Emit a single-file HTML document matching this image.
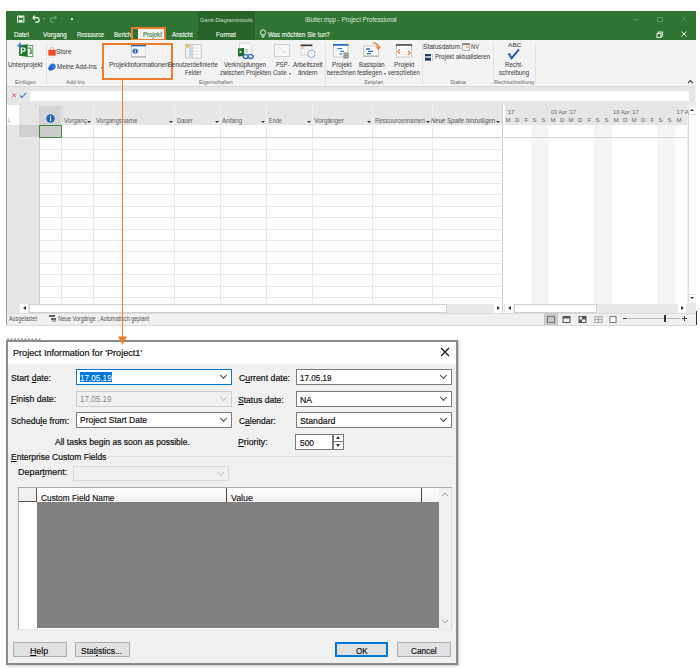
<!DOCTYPE html>
<html><head><meta charset="utf-8">
<style>
*{margin:0;padding:0;box-sizing:border-box}
html,body{width:700px;height:669px;overflow:hidden;background:#fff;font-family:"Liberation Sans",sans-serif;position:relative}
.a{position:absolute}
.t{position:absolute;white-space:nowrap;line-height:1}
.tab{position:absolute;top:30px;font-size:7px;color:#fff;white-space:nowrap;line-height:1}
.rb{position:absolute;font-size:6.6px;color:#444;white-space:nowrap;line-height:1}
.gl{position:absolute;top:79px;font-size:5.6px;color:#666;white-space:nowrap;line-height:1}
.sep{position:absolute;top:43px;width:1px;height:42px;background:#e3e3e3}
.hd{position:absolute;top:119px;font-size:6px;color:#666;white-space:nowrap;line-height:1}
.dd{position:absolute;top:120.8px;width:0;height:0;border-left:2px solid transparent;border-right:2px solid transparent;border-top:2.4px solid #333}
.vl{position:absolute;top:105px;width:1px;height:199px;background:#dadada}
.dl{position:absolute;font-size:9.4px;color:#000;white-space:nowrap;line-height:1}
.cb{position:absolute;height:16px;background:#fff;border:1px solid #7a7a7a}
.chev{position:absolute;width:5px;height:5px;border-right:1px solid #444;border-bottom:1px solid #444;transform:rotate(45deg)}
.btn{position:absolute;top:642px;height:15px;background:#e1e1e1;border:1px solid #adadad;font-size:8.5px;color:#000;text-align:center;line-height:13px}
u{text-decoration:underline}
.x{position:absolute;white-space:nowrap;line-height:1;transform-origin:0 0}
</style></head><body>

<!-- ============ APP WINDOW ============ -->
<div class="a" style="left:6px;top:11px;width:690px;height:315px;background:#f3f3f3;border-left:1px solid #999"></div>
<!-- title bar -->
<div class="a" style="left:6px;top:11px;width:690px;height:29px;background:#2f7432"></div>
<div class="a" style="left:198px;top:11px;width:57px;height:29px;background:#276427"></div>

<!-- QAT -->
<svg class="a" style="left:16px;top:14px" width="62" height="10" viewBox="0 0 62 10">
 <rect x="1.6" y="2" width="6.3" height="6" fill="none" stroke="#f2f7f2" stroke-width="1"/>
 <rect x="2.8" y="2" width="3.9" height="1.8" fill="#f2f7f2"/>
 <rect x="3" y="5.8" width="3.5" height="2" fill="#f2f7f2"/>
 <path d="M16.8 3.6L18.9 1.6M16.8 3.6L18.9 5.6M16.8 3.6H20.8A2.3 2.3 0 0 1 20.8 8.2H19.2" fill="none" stroke="#f2f7f2" stroke-width="1.2"/>
 <path d="M27.3 4.2H29.3L28.3 5.3Z" fill="#e8f0e8"/>
 <path d="M40.6 3.6L38.5 1.6M40.6 3.6L38.5 5.6M40.6 3.6H36.6A2.3 2.3 0 0 0 36.6 8.2H38.2" fill="none" stroke="#6aa06a" stroke-width="1.1"/>
 <path d="M45.3 4.2H47.3L46.3 5.3Z" fill="#6aa06a"/>
 <circle cx="56" cy="5" r="1.1" fill="#e8f0e8"/>
</svg>
<!-- window controls -->
<div class="a" style="left:633px;top:19px;width:6px;height:1px;background:#55935a"></div>
<div class="a" style="left:657px;top:16.5px;width:5.5px;height:5px;border:1px solid #55935a"></div>
<svg class="a" style="left:681px;top:16px" width="6" height="6"><path d="M.5 .5L5.5 5.5M5.5 .5L.5 5.5" stroke="#55935a" stroke-width=".9"/></svg>
<svg class="a" style="left:656px;top:30.5px" width="8" height="7"><rect x="1" y="2.5" width="4" height="4" fill="none" stroke="#d8ead8" stroke-width="1.1"/><path d="M2.5 2.5V1H6.5V5H5" fill="none" stroke="#d8ead8" stroke-width="1.1"/></svg>
<svg class="a" style="left:681px;top:31px" width="6" height="6"><path d="M.5 .5L5.5 5.5M5.5 .5L.5 5.5" stroke="#f4f8f4" stroke-width=".9"/></svg>

<!-- tabs -->
<div class="a" style="left:138px;top:28px;width:27px;height:12px;background:#f3f3f3"></div>
<svg class="a" style="left:259px;top:29px" width="8" height="9"><circle cx="4" cy="3.5" r="2.6" fill="none" stroke="#fff" stroke-width=".9"/><path d="M3 6.5V8H5V6.5" fill="none" stroke="#fff" stroke-width=".9"/></svg>
<!-- orange tab box -->
<div class="a" style="left:131px;top:27px;width:35px;height:14px;border:2px solid #ee7d2e"></div>

<!-- ribbon -->
<div class="a" style="left:7px;top:40px;width:689px;height:46px;background:#f3f3f3"></div>
<div class="a" style="left:7px;top:85.5px;width:688px;height:1px;background:#dadada"></div>
<div class="sep" style="left:46px"></div>
<div class="sep" style="left:325px"></div>
<div class="sep" style="left:422px"></div>
<div class="sep" style="left:493px"></div>
<div class="sep" style="left:535px"></div>

<!-- Unterprojekt icon -->
<svg class="a" style="left:17px;top:42px" width="17" height="16" viewBox="0 0 17 16">
 <rect x="10" y="3.5" width="5.8" height="11" fill="#fff" stroke="#5fa35f" stroke-width="1"/>
 <path d="M11.5 6.5Q13.5 5 14 7.5V11.5H12.5" fill="none" stroke="#1f6e28" stroke-width="1.2"/>
 <path d="M2 3.2L10.5 2.3V14.7L2 13.8Z" fill="#1f7a2a"/>
 <path d="M4.3 12V6H6.6A1.6 1.6 0 0 1 6.6 9.2H4.3" fill="none" stroke="#fff" stroke-width="1.2"/>
 <path d="M0.3 3.5H5.7M3 0.8V6.2" stroke="#2f6fd0" stroke-width="1.5"/>
</svg>

<!-- Store / Add-ins -->
<svg class="a" style="left:48px;top:46.5px" width="8" height="9"><path d="M0.3 2.8H7.7V8.6H0.3Z" fill="#ea4a24"/><path d="M2.5 2.8V1.6A1.5 1.5 0 0 1 5.5 1.6V2.8" fill="none" stroke="#f09a80" stroke-width=".8"/></svg>
<svg class="a" style="left:48px;top:62.5px" width="8" height="8"><circle cx="4.6" cy="3.6" r="3.1" fill="#2a7bd6"/><circle cx="2.6" cy="5.4" r="2.4" fill="#1a63c2"/></svg>
<div class="a" style="left:100.5px;top:66.5px;width:0;height:0;border-left:1.5px solid transparent;border-right:1.5px solid transparent;border-top:2px solid #555"></div>

<!-- Projektinformationen -->
<svg class="a" style="left:130.5px;top:44.3px" width="15.5" height="13.5" viewBox="0 0 15.5 13.5">
 <rect x="0.5" y="0.5" width="14.5" height="12.5" fill="#fff" stroke="#c4c4c4"/>
 <path d="M0.5 12.8H15" stroke="#9a9a9a" stroke-width=".8"/>
 <rect x="0" y="0" width="15.5" height="2.4" fill="#2766c0"/>
 <path d="M7.5 3V12M10.5 3V12M13 3V12" stroke="#e6e6e6" stroke-width=".8"/>
 <circle cx="4.2" cy="7.1" r="2.7" fill="#1f63bd"/>
 <rect x="3.75" y="6.1" width="0.9" height="2.9" fill="#fff"/>
 <rect x="3.75" y="4.9" width="0.9" height="0.8" fill="#fff"/>
</svg>
<!-- Benutzerdefinierte Felder -->
<svg class="a" style="left:185px;top:42.5px" width="17" height="16" viewBox="0 0 17 16">
 <rect x="0.5" y="1.5" width="15.8" height="13.5" fill="#fff" stroke="#c6c6c6"/>
 <rect x="4.2" y="2" width="4" height="12.5" fill="#c4d8f0"/>
 <path d="M1 5H16M1 8.2H16M1 11.4H16M4.2 2V14.5M8.2 2V14.5M12 2V14.5" stroke="#d4d4d4" stroke-width=".6"/>
 <path d="M2.8 0.2L3.6 2.1L5.5 2.3L4.1 3.6L4.5 5.5L2.8 4.5L1.1 5.5L1.5 3.6L0.1 2.3L2 2.1Z" fill="#f0c050"/>
</svg>
<!-- Verknüpfungen -->
<svg class="a" style="left:237px;top:42px" width="18" height="18" viewBox="0 0 18 18">
 <path d="M2.5 1H12L14.7 3.7V11H2.5Z" fill="#fbfbfb" stroke="#cdcdcd" stroke-width=".8"/>
 <path d="M1 6.5L7 6V14L1 14.5Z" fill="#1d6e22"/>
 <path d="M2.6 8.2L5.3 9.8L2.6 11.6Z" fill="#d9ecd9"/>
 <path d="M7.5 7.5H11M7.5 9.3H11" stroke="#8cc78c" stroke-width=".9"/>
 <ellipse cx="8.8" cy="14.6" rx="2.6" ry="1.9" fill="none" stroke="#2b66bb" stroke-width="1.3"/>
 <ellipse cx="13.6" cy="14.6" rx="2.6" ry="1.9" fill="none" stroke="#2b66bb" stroke-width="1.3"/>
</svg>
<!-- PSP -->
<svg class="a" style="left:274px;top:44px" width="16" height="13" viewBox="0 0 16 13">
 <rect x="0.5" y="0.5" width="15" height="12" fill="#f8f8f8" stroke="#cfcfcf"/>
 <path d="M4 4H7L9 8H12" fill="none" stroke="#cfcfcf" stroke-width=".8"/>
</svg>
<div class="a" style="left:289px;top:72.8px;border-left:1.5px solid transparent;border-right:1.5px solid transparent;border-top:2px solid #555"></div>
<!-- Arbeitszeit -->
<svg class="a" style="left:300px;top:44px" width="17" height="15" viewBox="0 0 17 15">
 <rect x="1" y="1" width="11" height="10" fill="#fff" stroke="#cfcfcf" stroke-width=".8"/>
 <rect x="0.6" y="0.6" width="11.8" height="1.6" fill="#333"/>
 <path d="M1 5H12M1 8H12M4.5 2V11M8 2V11" stroke="#dedede" stroke-width=".6"/>
 <rect x="1.3" y="2.5" width="3" height="2.3" fill="#f6c28f"/>
 <circle cx="11.5" cy="9.8" r="3.6" fill="#fff" stroke="#7a9fd0" stroke-width=".9"/>
 <path d="M11.2 8.3L12.3 10" stroke="#8a8a8a" stroke-width=".7"/>
</svg>
<!-- Projekt berechnen -->
<svg class="a" style="left:333px;top:44px" width="16" height="15" viewBox="0 0 16 15">
 <rect x="0.5" y="0.5" width="14.5" height="12.5" fill="#fff" stroke="#c8c8c8"/>
 <rect x="0" y="0" width="15.5" height="1.8" fill="#2a6fc9"/>
 <path d="M3 2V13" stroke="#d8d8d8" stroke-width=".7"/>
 <path d="M4.5 4.5H9M7 7.3H11M6 10H9.5" stroke="#2a6fc9" stroke-width="1.1"/>
 <rect x="10.5" y="8.5" width="5" height="6" fill="#8a8a8a"/>
 <path d="M11.3 10.3H14.7M11.3 12.3H14.7" stroke="#cfcfcf" stroke-width=".7"/>
</svg>
<!-- Basisplan -->
<svg class="a" style="left:363px;top:42px" width="18" height="16" viewBox="0 0 18 16">
 <rect x="0.5" y="4" width="15" height="10" fill="#fff" stroke="#c8c8c8"/>
 <path d="M0.5 14.2H15.5" stroke="#9a9a9a" stroke-width=".8"/>
 <path d="M3 7H7M5 9.3H10M4 11.6H8" stroke="#2a6fc9" stroke-width="1.3"/>
 <path d="M10 1.3A4.2 4.2 0 0 1 15.3 5.6" fill="none" stroke="#ed7d31" stroke-width="1.4"/>
 <path d="M13 4.6L15.3 7.2L17.4 4.4" fill="none" stroke="#ed7d31" stroke-width="1.3"/>
</svg>
<div class="a" style="left:384px;top:72.8px;border-left:1.5px solid transparent;border-right:1.5px solid transparent;border-top:2px solid #555"></div>
<!-- Projekt verschieben -->
<svg class="a" style="left:396px;top:44px" width="16" height="14" viewBox="0 0 16 14">
 <rect x="0.5" y="0.5" width="15" height="12.5" fill="#fff" stroke="#c8c8c8"/>
 <rect x="0" y="0" width="16" height="1.8" fill="#5a5a5a"/>
 <path d="M5 5H13M4 8H11M5 10.5H12" stroke="#e2e2e2" stroke-width=".8"/>
 <path d="M4 5.5L2 7.5L4 9.5M12 7L14 9L12 11" fill="none" stroke="#ed7d31" stroke-width="1.3"/>
</svg>
<!-- Status -->
<svg class="a" style="left:462px;top:43px" width="8" height="8"><rect x=".5" y=".5" width="7" height="7" fill="#f4f4f4" stroke="#a8a8a8" stroke-width=".8"/><rect x=".5" y=".5" width="7" height="1.3" fill="#6a6a6a"/><rect x="4" y="3" width="3" height="2" fill="#f5b784"/></svg>
<svg class="a" style="left:425px;top:53.8px" width="8" height="7"><rect x=".4" y=".4" width="7.2" height="6.2" fill="#fff" stroke="#b0b0b0" stroke-width=".6"/><rect x="0" y="0" width="6" height="2.3" fill="#1f3f66"/><rect x="0" y="3.6" width="6" height="3" fill="#1f3f66"/></svg>
<!-- Rechtschreibung -->
<svg class="a" style="left:506px;top:48px" width="15" height="12"><path d="M2.6 5.4L5.6 10.2L13 1.4" fill="none" stroke="#2360b8" stroke-width="2"/></svg>
<svg class="a" style="left:686.5px;top:79px" width="7" height="5"><path d="M1 4L3.5 1.5L6 4" fill="none" stroke="#444" stroke-width="1.1"/></svg>

<!-- big orange box -->
<div class="a" style="left:102px;top:43px;width:71px;height:37px;border:2px solid #ee7d2e"></div>

<!-- formula bar -->
<div class="a" style="left:7px;top:86.5px;width:688px;height:18.5px;background:#e6e6e6"></div>
<div class="a" style="left:30px;top:90.8px;width:659.3px;height:10.5px;background:#fff"></div>
<svg class="a" style="left:11px;top:92px" width="20" height="8"><path d="M1.5 1.5L5 5M5 1.5L1.5 5" stroke="#d9534f" stroke-width="1"/><path d="M9 3.5L11 5.5L15 1" fill="none" stroke="#2a6fc9" stroke-width="1.1"/></svg>


<!-- ============ GRID ============ -->
<div class="a" style="left:7px;top:105px;width:689px;height:208px;background:#fff"></div>
<!-- left gutter grey column -->
<div class="a" style="left:7px;top:125px;width:33px;height:188px;background:#e6e6e6"></div>
<div class="a" style="left:19px;top:105px;width:483px;height:20px;background:#e6e6e6"></div>
<div class="a" style="left:39px;top:106px;width:22px;height:19px;background:#d4d4d4"></div>
<svg class="a" style="left:46px;top:114px" width="9" height="9"><circle cx="4.5" cy="4.5" r="4.2" fill="#1e64c0"/><rect x="4" y="3.6" width="1.1" height="3.6" fill="#fff"/><rect x="4" y="1.8" width="1.1" height="1.1" fill="#fff"/></svg>
<!-- row 1 -->
<div class="a" style="left:19px;top:125px;width:20px;height:12px;background:#d0d0d0"></div>
<div class="a" style="left:19px;top:148.7px;width:483px;height:1px;background:#e9e9e9"></div>
<div class="a" style="left:19px;top:160.1px;width:483px;height:1px;background:#e9e9e9"></div>
<div class="a" style="left:19px;top:171.5px;width:483px;height:1px;background:#e9e9e9"></div>
<div class="a" style="left:19px;top:182.9px;width:483px;height:1px;background:#e9e9e9"></div>
<div class="a" style="left:19px;top:194.3px;width:483px;height:1px;background:#e9e9e9"></div>
<div class="a" style="left:19px;top:205.7px;width:483px;height:1px;background:#e9e9e9"></div>
<div class="a" style="left:19px;top:217.1px;width:483px;height:1px;background:#e9e9e9"></div>
<div class="a" style="left:19px;top:228.5px;width:483px;height:1px;background:#e9e9e9"></div>
<div class="a" style="left:19px;top:239.9px;width:483px;height:1px;background:#e9e9e9"></div>
<div class="a" style="left:19px;top:251.3px;width:483px;height:1px;background:#e9e9e9"></div>
<div class="a" style="left:19px;top:262.7px;width:483px;height:1px;background:#e9e9e9"></div>
<div class="a" style="left:19px;top:274.1px;width:483px;height:1px;background:#e9e9e9"></div>
<div class="a" style="left:19px;top:285.5px;width:483px;height:1px;background:#e9e9e9"></div>
<div class="a" style="left:19px;top:296.9px;width:483px;height:1px;background:#e9e9e9"></div>
<div class="a" style="left:39px;top:125px;width:1px;height:179px;background:#cdcdcd"></div>
<div class="a" style="left:61px;top:125px;width:1px;height:179px;background:#e9e9e9"></div>
<div class="a" style="left:93px;top:125px;width:1px;height:179px;background:#e9e9e9"></div>
<div class="a" style="left:174px;top:125px;width:1px;height:179px;background:#e9e9e9"></div>
<div class="a" style="left:220px;top:125px;width:1px;height:179px;background:#e9e9e9"></div>
<div class="a" style="left:266px;top:125px;width:1px;height:179px;background:#e9e9e9"></div>
<div class="a" style="left:312px;top:125px;width:1px;height:179px;background:#e9e9e9"></div>
<div class="a" style="left:372px;top:125px;width:1px;height:179px;background:#e9e9e9"></div>
<div class="a" style="left:432px;top:125px;width:1px;height:179px;background:#e9e9e9"></div>
<div class="a" style="left:531px;top:125px;width:18px;height:179px;background:#f5f5f5"></div>
<div class="a" style="left:594px;top:125px;width:18px;height:179px;background:#f5f5f5"></div>
<div class="a" style="left:657px;top:125px;width:18px;height:179px;background:#f5f5f5"></div>
<div class="a" style="left:40px;top:136.5px;width:462px;height:1.6px;background:#cfcfcf"></div>
<div class="a" style="left:504px;top:136.5px;width:183px;height:1.6px;background:#d6d6d6"></div>
<div class="a" style="left:39px;top:125px;width:23px;height:13px;background:#cdcdcd;border:1px solid #3d8a3d"></div>
<!-- header columns -->
<div class="a" style="left:93px;top:105px;width:1px;height:20px;background:#f0f0f0"></div>
<div class="a" style="left:174px;top:105px;width:1px;height:20px;background:#f0f0f0"></div>
<div class="a" style="left:220px;top:105px;width:1px;height:20px;background:#f0f0f0"></div>
<div class="a" style="left:266px;top:105px;width:1px;height:20px;background:#f0f0f0"></div>
<div class="a" style="left:312px;top:105px;width:1px;height:20px;background:#f0f0f0"></div>
<div class="a" style="left:372px;top:105px;width:1px;height:20px;background:#f0f0f0"></div>
<div class="a" style="left:432px;top:105px;width:1px;height:20px;background:#f0f0f0"></div>

<div class="a" style="left:62px;top:105px;width:1px;height:20px;background:#d8d8d8"></div>
<div class="a" style="left:80px;top:105px;width:12px;height:20px;background:#e6e6e6"></div>
<div class="a" style="left:425px;top:105px;width:7px;height:20px;background:#e6e6e6"></div>
<div class="a" style="left:494px;top:105px;width:8px;height:20px;background:#e6e6e6"></div>
<div class="dd" style="left:87px"></div>
<div class="dd" style="left:169px"></div>
<div class="dd" style="left:215px"></div>
<div class="dd" style="left:261px"></div>
<div class="dd" style="left:307px"></div>
<div class="dd" style="left:367px"></div>
<div class="dd" style="left:426px"></div>
<div class="dd" style="left:496px"></div>
<!-- split bar -->
<div class="a" style="left:502px;top:105px;width:2px;height:208px;background:#fff;border-left:1px solid #d0d0d0"></div>
<!-- gantt -->
<div class="a" style="left:504px;top:105px;width:183px;height:20px;background:#e6e6e6"></div>
<div class="a" style="left:504px;top:105px;width:1px;height:20px;background:#fff"></div>
<!-- scrollbars -->
<div class="a" style="left:687px;top:102px;width:9px;height:211px;background:#ececec"></div>
<div class="a" style="left:687.5px;top:106.5px;width:8px;height:195px;background:#fbfbfb;border-left:1px solid #dcdcdc"></div>
<div class="a" style="left:687.5px;top:114.2px;width:8px;height:1px;background:#d8d8d8"></div>
<div class="a" style="left:689.5px;top:109px;border-left:2px solid transparent;border-right:2px solid transparent;border-bottom:2.5px solid #333"></div>
<div class="a" style="left:687.5px;top:293.5px;width:8px;height:1px;background:#e0e0e0"></div>
<div class="a" style="left:689.5px;top:296.5px;border-left:2px solid transparent;border-right:2px solid transparent;border-top:2.5px solid #333"></div>
<div class="a" style="left:20px;top:304px;width:482px;height:9px;background:#e8e8e8"></div>
<div class="a" style="left:20px;top:304px;width:8px;height:9px;background:#fff"></div>
<div class="a" style="left:23px;top:306px;border-top:2px solid transparent;border-bottom:2px solid transparent;border-right:3px solid #333"></div>
<div class="a" style="left:29px;top:304px;width:418px;height:9px;background:#fff;border:1px solid #d0d0d0"></div>
<div class="a" style="left:494px;top:304px;width:8px;height:9px;background:#fff"></div>
<div class="a" style="left:497px;top:306px;border-top:2px solid transparent;border-bottom:2px solid transparent;border-left:3px solid #333"></div>
<div class="a" style="left:504px;top:304px;width:192px;height:9px;background:#e8e8e8"></div>
<div class="a" style="left:505px;top:304px;width:8px;height:9px;background:#fff"></div>
<div class="a" style="left:508px;top:306px;border-top:2px solid transparent;border-bottom:2px solid transparent;border-right:3px solid #333"></div>
<div class="a" style="left:514px;top:304px;width:83px;height:9px;background:#fff;border:1px solid #d0d0d0"></div>
<div class="a" style="left:678px;top:304px;width:8px;height:9px;background:#fff"></div>
<div class="a" style="left:681px;top:306px;border-top:2px solid transparent;border-bottom:2px solid transparent;border-left:3px solid #333"></div>
<!-- status bar -->
<div class="a" style="left:7px;top:313px;width:689px;height:12px;background:#f0f0f0;border-top:1px solid #dcdcdc"></div>
<div class="a" style="left:6px;top:325px;width:690px;height:1px;background:#dadada"></div>
<svg class="a" style="left:49px;top:315px" width="8" height="8"><rect x="0" y="0" width="6" height="2" fill="#666"/><rect x="2" y="3" width="5" height="2" fill="#666"/><path d="M3 6H7" stroke="#666"/></svg>
<div class="a" style="left:544px;top:313px;width:14px;height:12px;background:#c6c6c6"></div>
<svg class="a" style="left:546px;top:315px" width="80" height="9">
 <rect x="1.5" y="1.5" width="7" height="6" fill="none" stroke="#777"/>
 <rect x="17" y="1.5" width="7" height="6" fill="none" stroke="#555"/><rect x="17" y="1.5" width="7" height="2" fill="#555"/>
 <rect x="33" y="1.5" width="7" height="6" fill="none" stroke="#555"/><rect x="36" y="1.5" width="4" height="3" fill="#555"/><rect x="33" y="4.5" width="3" height="3" fill="#555"/>
 <rect x="49" y="1.5" width="7" height="6" fill="none" stroke="#aaa"/><path d="M49 4.5H56M52.5 1.5V7.5" stroke="#aaa"/>
 <rect x="64" y="1.5" width="6" height="6" fill="#fff" stroke="#777"/>
</svg>
<div class="a" style="left:623px;top:318px;width:4px;height:1px;background:#444"></div>
<div class="a" style="left:628px;top:318px;width:52px;height:1px;background:#bbb"></div>
<div class="a" style="left:664px;top:315px;width:2px;height:7px;background:#333"></div>
<div class="a" style="left:682px;top:318px;width:5px;height:1px;background:#444"></div>
<div class="a" style="left:684px;top:316px;width:1px;height:5px;background:#444"></div>
<div class="a" style="left:696px;top:311px;width:1px;height:14px;background:#333"></div>


<!-- ============ DIALOG ============ -->
<svg class="a" style="left:7px;top:337px" width="36" height="4"><path d="M0 2.5H34" stroke="#999" stroke-width="2" stroke-dasharray="2 1.5"/></svg>
<div class="a" style="left:6px;top:340px;width:452px;height:325px;background:#f0f0f0;border:2px solid #8c8c8c;box-shadow:1px 1px 2px rgba(0,0,0,.25)"></div>
<div class="a" style="left:8px;top:342px;width:448px;height:22px;background:#fff"></div>
<svg class="a" style="left:440px;top:347px" width="10" height="10"><path d="M1 1L9 9M9 1L1 9" stroke="#111" stroke-width="1.1"/></svg>


<div class="cb" style="left:76px;top:369px;width:156px;border-color:#0078d7"></div>
<div class="a" style="left:80px;top:372px;width:32px;height:10px;background:#0078d7"></div>
<div class="chev" style="left:221px;top:373px"></div>
<div class="cb" style="left:76px;top:391px;width:156px;border-color:#cfcfcf;background:#f0f0f0"></div>
<div class="chev" style="left:221px;top:395px;border-color:#bdbdbd"></div>
<div class="cb" style="left:76px;top:412px;width:156px"></div>
<div class="chev" style="left:221px;top:416px"></div>

<div class="cb" style="left:296px;top:369px;width:156px"></div>
<div class="chev" style="left:441px;top:373px"></div>
<div class="cb" style="left:296px;top:391px;width:156px"></div>
<div class="chev" style="left:441px;top:395px"></div>
<div class="cb" style="left:296px;top:412px;width:156px"></div>
<div class="chev" style="left:441px;top:416px"></div>
<div class="cb" style="left:295px;top:434px;width:38px;height:16px"></div>
<div class="a" style="left:333px;top:434px;width:11px;height:8px;background:#fff;border:1px solid #7a7a7a"></div>
<div class="a" style="left:333px;top:442px;width:11px;height:8px;background:#fff;border:1px solid #7a7a7a;border-top:none"></div>
<div class="a" style="left:336px;top:436px;border-left:2.5px solid transparent;border-right:2.5px solid transparent;border-bottom:3px solid #333"></div>
<div class="a" style="left:336px;top:444px;border-left:2.5px solid transparent;border-right:2.5px solid transparent;border-top:3px solid #333"></div>

<div class="a" style="left:108px;top:456px;width:344px;height:1px;background:#dcdcdc"></div>
<div class="cb" style="left:73px;top:466px;width:156px;height:15px;border-color:#d9d9d9;background:#f0f0f0"></div>
<div class="chev" style="left:218px;top:470px;border-color:#c8c8c8"></div>

<!-- table -->
<div class="a" style="left:18px;top:487px;width:434px;height:143px;background:#fff;border:1px solid #a9a9a9;border-bottom-color:#e8e8e8;border-right-color:#dcdcdc"></div>
<div class="a" style="left:19px;top:488px;width:18px;height:14px;background:#f0f0f0;border-right:1px solid #555;border-bottom:1px solid #555"></div>
<div class="a" style="left:37px;top:488px;width:402px;height:14px;background:linear-gradient(#fff,#f2f2f2)"></div>
<div class="a" style="left:226px;top:488px;width:1px;height:14px;background:#444"></div>
<div class="a" style="left:421px;top:488px;width:1px;height:14px;background:#444"></div>
<div class="a" style="left:37px;top:502px;width:402px;height:126px;background:#808080"></div>
<div class="a" style="left:439px;top:488px;width:12px;height:141px;background:#f0f0f0"></div>
<svg class="a" style="left:441px;top:492px" width="8" height="5"><path d="M1 4L4 1L7 4" fill="none" stroke="#a0a0a0" stroke-width="1"/></svg>
<svg class="a" style="left:441px;top:619px" width="8" height="5"><path d="M1 1L4 4L7 1" fill="none" stroke="#a0a0a0" stroke-width="1"/></svg>

<!-- buttons -->
<div class="btn" style="left:13px;width:54px"></div>
<div class="btn" style="left:75px;width:55px"></div>
<div class="btn" style="left:335px;width:53px;border:2px solid #0078d7;line-height:11px"></div>
<div class="btn" style="left:397px;width:54px"></div>
<div class="x" style="left:200.00px;top:17.79px;font-size:5.8px;color:#cfe0cf;transform:scaleX(0.9545);">Gantt-Diagrammtools</div>
<div class="x" style="left:305.00px;top:17.41px;font-size:6.6px;color:#dbe9db;transform:scaleX(0.9412);">iButler.mpp - Project Professional</div>
<div class="x" style="left:13.80px;top:31.21px;font-size:7.2px;color:#ffffff;transform:scaleX(0.8824);-webkit-text-stroke:0.08px #fff">Datei</div>
<div class="x" style="left:43.00px;top:31.21px;font-size:7.2px;color:#ffffff;transform:scaleX(0.8889);-webkit-text-stroke:0.08px #fff">Vorgang</div>
<div class="x" style="left:77.00px;top:31.21px;font-size:7.2px;color:#ffffff;transform:scaleX(0.7941);-webkit-text-stroke:0.08px #fff">Ressource</div>
<div class="x" style="left:114.20px;top:31.21px;font-size:7.2px;color:#ffffff;transform:scaleX(0.8400);-webkit-text-stroke:0.08px #fff">Berich</div>
<div class="x" style="left:143.00px;top:31.21px;font-size:7.2px;color:#3a7a3a;transform:scaleX(0.8409);-webkit-text-stroke:0.15px #3a7a3a">Projekt</div>
<div class="x" style="left:171.70px;top:31.21px;font-size:7.2px;color:#ffffff;transform:scaleX(0.8826);-webkit-text-stroke:0.08px #fff">Ansicht</div>
<div class="x" style="left:216.00px;top:31.21px;font-size:7.2px;color:#ffffff;transform:scaleX(0.8826);-webkit-text-stroke:0.08px #fff">Format</div>
<div class="x" style="left:268.30px;top:31.21px;font-size:7.2px;color:#ffffff;transform:scaleX(0.8569);-webkit-text-stroke:0.08px #fff">Was möchten Sie tun?</div>
<div class="x" style="left:8.10px;top:61.77px;font-size:6.3px;color:#404040;transform:scaleX(1.0088);-webkit-text-stroke:0.04px #404040">Unterprojekt</div>
<div class="x" style="left:15.00px;top:80.01px;font-size:5.9px;color:#6a6a6a;transform:scaleX(0.8957);">Einfügen</div>
<div class="x" style="left:55.97px;top:49.27px;font-size:6.3px;color:#404040;transform:scaleX(1.0286);-webkit-text-stroke:0.04px #404040">Store</div>
<div class="x" style="left:57.00px;top:63.77px;font-size:6.3px;color:#404040;transform:scaleX(0.9875);-webkit-text-stroke:0.04px #404040">Meine Add-Ins</div>
<div class="x" style="left:66.40px;top:80.01px;font-size:5.9px;color:#6a6a6a;transform:scaleX(0.9300);">Add-Ins</div>
<div class="x" style="left:109.00px;top:61.97px;font-size:6.3px;color:#404040;transform:scaleX(1.0351);-webkit-text-stroke:0.04px #404040">Projektinformationen</div>
<div class="x" style="left:168.00px;top:62.17px;font-size:6.3px;color:#404040;transform:scaleX(0.9745);-webkit-text-stroke:0.04px #404040">Benutzerdefinierte</div>
<div class="x" style="left:185.00px;top:70.07px;font-size:6.3px;color:#404040;transform:scaleX(0.9222);-webkit-text-stroke:0.04px #404040">Felder</div>
<div class="x" style="left:199.00px;top:80.01px;font-size:5.9px;color:#6a6a6a;transform:scaleX(0.9054);">Eigenschaften</div>
<div class="x" style="left:224.40px;top:61.97px;font-size:6.3px;color:#404040;transform:scaleX(0.9905);-webkit-text-stroke:0.04px #404040">Verknüpfungen</div>
<div class="x" style="left:219.80px;top:70.07px;font-size:6.3px;color:#404040;transform:scaleX(0.9426);-webkit-text-stroke:0.04px #404040">zwischen Projekten</div>
<div class="x" style="left:276.00px;top:61.97px;font-size:6.3px;color:#404040;transform:scaleX(0.9143);-webkit-text-stroke:0.04px #404040">PSP-</div>
<div class="x" style="left:272.50px;top:70.07px;font-size:6.3px;color:#404040;transform:scaleX(0.9000);-webkit-text-stroke:0.04px #404040">Code</div>
<div class="x" style="left:293.00px;top:61.97px;font-size:6.3px;color:#404040;transform:scaleX(1.0069);-webkit-text-stroke:0.04px #404040">Arbeitszeit</div>
<div class="x" style="left:298.00px;top:70.07px;font-size:6.3px;color:#404040;transform:scaleX(1.0000);-webkit-text-stroke:0.04px #404040">ändern</div>
<div class="x" style="left:331.80px;top:61.77px;font-size:6.3px;color:#404040;transform:scaleX(0.9947);-webkit-text-stroke:0.04px #404040">Projekt</div>
<div class="x" style="left:327.00px;top:69.97px;font-size:6.3px;color:#404040;transform:scaleX(0.9621);-webkit-text-stroke:0.04px #404040">berechnen</div>
<div class="x" style="left:359.00px;top:61.77px;font-size:6.3px;color:#404040;transform:scaleX(0.9333);-webkit-text-stroke:0.04px #404040">Basisplan</div>
<div class="x" style="left:357.40px;top:69.97px;font-size:6.3px;color:#404040;transform:scaleX(0.9840);-webkit-text-stroke:0.04px #404040">festlegen</div>
<div class="x" style="left:393.90px;top:61.77px;font-size:6.3px;color:#404040;transform:scaleX(1.0368);-webkit-text-stroke:0.04px #404040">Projekt</div>
<div class="x" style="left:388.00px;top:69.97px;font-size:6.3px;color:#404040;transform:scaleX(0.9353);-webkit-text-stroke:0.04px #404040">verschieben</div>
<div class="x" style="left:364.00px;top:79.81px;font-size:5.9px;color:#6a6a6a;transform:scaleX(0.9143);">Zeitplan</div>
<div class="x" style="left:423.26px;top:43.87px;font-size:6.3px;color:#404040;transform:scaleX(1.0441);-webkit-text-stroke:0.04px #404040">Statusdatum:</div>
<div class="x" style="left:471.00px;top:43.87px;font-size:6.3px;color:#404040;transform:scaleX(0.9111);-webkit-text-stroke:0.04px #404040">NV</div>
<div class="x" style="left:434.60px;top:54.17px;font-size:6.3px;color:#404040;transform:scaleX(0.9714);-webkit-text-stroke:0.04px #404040">Projekt aktualisieren</div>
<div class="x" style="left:449.53px;top:80.01px;font-size:5.9px;color:#6a6a6a;transform:scaleX(0.9667);">Status</div>
<div class="x" style="left:507.90px;top:42.25px;font-size:6.2px;color:#5a5a5a;transform:scaleX(1.0667);-webkit-text-stroke:0.15px #5a5a5a">ABC</div>
<div class="x" style="left:505.00px;top:61.87px;font-size:6.3px;color:#404040;transform:scaleX(0.9778);-webkit-text-stroke:0.04px #404040">Recht-</div>
<div class="x" style="left:498.60px;top:70.27px;font-size:6.3px;color:#404040;transform:scaleX(0.9774);-webkit-text-stroke:0.04px #404040">schreibung</div>
<div class="x" style="left:494.10px;top:80.01px;font-size:5.9px;color:#6a6a6a;transform:scaleX(0.9068);">Rechtschreibung</div>
<div class="x" style="left:7.00px;top:119.19px;font-size:4.5px;color:#aaa;transform:scaleX(1.5000);">1</div>
<div class="x" style="left:63.60px;top:117.68px;font-size:6.4px;color:#666;transform:scaleX(0.9696);-webkit-text-stroke:0.04px #666">Vorganç</div>
<div class="x" style="left:95.70px;top:117.68px;font-size:6.4px;color:#666;transform:scaleX(0.9605);-webkit-text-stroke:0.04px #666">Vorgangsname</div>
<div class="x" style="left:176.60px;top:117.68px;font-size:6.4px;color:#666;transform:scaleX(0.9059);-webkit-text-stroke:0.04px #666">Dauer</div>
<div class="x" style="left:222.30px;top:117.68px;font-size:6.4px;color:#666;transform:scaleX(0.9850);-webkit-text-stroke:0.04px #666">Anfang</div>
<div class="x" style="left:268.60px;top:117.68px;font-size:6.4px;color:#666;transform:scaleX(0.8667);-webkit-text-stroke:0.04px #666">Ende</div>
<div class="x" style="left:314.30px;top:117.68px;font-size:6.4px;color:#666;transform:scaleX(1.0000);-webkit-text-stroke:0.04px #666">Vorgänger</div>
<div class="x" style="left:374.60px;top:117.68px;font-size:6.4px;color:#666;transform:scaleX(0.9321);-webkit-text-stroke:0.04px #666">Ressourcennamen</div>
<div class="x" style="left:431.00px;top:117.68px;font-size:6.4px;color:#606060;transform:scaleX(0.9412);-webkit-text-stroke:0.05px #606060;font-style:italic">Neue Spalte hinzufügen</div>
<div class="x" style="left:506.50px;top:109.14px;font-size:6.1px;color:#6a6a6a;transform:scaleX(1.0000);">'17</div>
<div class="x" style="left:551.30px;top:109.14px;font-size:6.1px;color:#6a6a6a;transform:scaleX(0.9148);">03 Apr '17</div>
<div class="x" style="left:613.35px;top:109.14px;font-size:6.1px;color:#6a6a6a;transform:scaleX(0.9462);">10 Apr '17</div>
<div class="x" style="left:676.50px;top:109.14px;font-size:6.1px;color:#6a6a6a;transform:scaleX(1.0000);">17 A</div>
<div class="x" style="left:505.50px;top:117.44px;font-size:6.1px;color:#6a6a6a;transform:scaleX(1.0000);">M</div>
<div class="x" style="left:515.00px;top:117.44px;font-size:6.1px;color:#6a6a6a;transform:scaleX(1.0000);">D</div>
<div class="x" style="left:524.50px;top:117.44px;font-size:6.1px;color:#6a6a6a;transform:scaleX(1.0000);">F</div>
<div class="x" style="left:532.50px;top:117.44px;font-size:6.1px;color:#6a6a6a;transform:scaleX(1.0000);">S</div>
<div class="x" style="left:541.50px;top:117.44px;font-size:6.1px;color:#6a6a6a;transform:scaleX(1.0000);">S</div>
<div class="x" style="left:550.50px;top:117.44px;font-size:6.1px;color:#6a6a6a;transform:scaleX(1.0000);">M</div>
<div class="x" style="left:560.00px;top:117.44px;font-size:6.1px;color:#6a6a6a;transform:scaleX(1.0000);">D</div>
<div class="x" style="left:568.50px;top:117.44px;font-size:6.1px;color:#6a6a6a;transform:scaleX(1.0000);">M</div>
<div class="x" style="left:578.00px;top:117.44px;font-size:6.1px;color:#6a6a6a;transform:scaleX(1.0000);">D</div>
<div class="x" style="left:587.50px;top:117.44px;font-size:6.1px;color:#6a6a6a;transform:scaleX(1.0000);">F</div>
<div class="x" style="left:595.50px;top:117.44px;font-size:6.1px;color:#6a6a6a;transform:scaleX(1.0000);">S</div>
<div class="x" style="left:604.50px;top:117.44px;font-size:6.1px;color:#6a6a6a;transform:scaleX(1.0000);">S</div>
<div class="x" style="left:613.50px;top:117.44px;font-size:6.1px;color:#6a6a6a;transform:scaleX(1.0000);">M</div>
<div class="x" style="left:623.00px;top:117.44px;font-size:6.1px;color:#6a6a6a;transform:scaleX(1.0000);">D</div>
<div class="x" style="left:631.50px;top:117.44px;font-size:6.1px;color:#6a6a6a;transform:scaleX(1.0000);">M</div>
<div class="x" style="left:641.00px;top:117.44px;font-size:6.1px;color:#6a6a6a;transform:scaleX(1.0000);">D</div>
<div class="x" style="left:650.50px;top:117.44px;font-size:6.1px;color:#6a6a6a;transform:scaleX(1.0000);">F</div>
<div class="x" style="left:658.50px;top:117.44px;font-size:6.1px;color:#6a6a6a;transform:scaleX(1.0000);">S</div>
<div class="x" style="left:667.50px;top:117.44px;font-size:6.1px;color:#6a6a6a;transform:scaleX(1.0000);">S</div>
<div class="x" style="left:676.50px;top:117.44px;font-size:6.1px;color:#6a6a6a;transform:scaleX(1.0000);">M</div>
<div class="x" style="left:9.00px;top:316.30px;font-size:6.5px;color:#505050;transform:scaleX(0.8235);">Ausgelastet</div>
<div class="x" style="left:58.00px;top:316.30px;font-size:6.5px;color:#505050;transform:scaleX(0.8349);">Neue Vorgänge : Automatisch geplant</div>
<div class="x" style="left:13.01px;top:349.21px;font-size:9.2px;color:#111;transform:scaleX(0.9922);-webkit-text-stroke:0.2px #111">Project Information for 'Project1'</div>
<div class="x" style="left:11.36px;top:374.21px;font-size:9.2px;color:#111;transform:scaleX(0.9415);-webkit-text-stroke:0.2px #111">Start <u>d</u>ate:</div>
<div class="x" style="left:11.35px;top:395.31px;font-size:9.2px;color:#111;transform:scaleX(0.9500);-webkit-text-stroke:0.2px #111"><u>F</u>inish date:</div>
<div class="x" style="left:11.36px;top:417.11px;font-size:9.2px;color:#111;transform:scaleX(0.9417);-webkit-text-stroke:0.2px #111">Schedu<u>l</u>e from:</div>
<div class="x" style="left:54.60px;top:438.11px;font-size:9.2px;color:#111;transform:scaleX(0.9297);-webkit-text-stroke:0.2px #111">All tasks begin as soon as possible.</div>
<div class="x" style="left:238.80px;top:374.11px;font-size:9.2px;color:#111;transform:scaleX(0.9509);-webkit-text-stroke:0.2px #111">C<u>u</u>rrent date:</div>
<div class="x" style="left:237.87px;top:395.71px;font-size:9.2px;color:#111;transform:scaleX(0.9312);-webkit-text-stroke:0.2px #111"><u>S</u>tatus date:</div>
<div class="x" style="left:238.80px;top:416.91px;font-size:9.2px;color:#111;transform:scaleX(0.9179);-webkit-text-stroke:0.2px #111">C<u>a</u>lendar:</div>
<div class="x" style="left:237.85px;top:437.91px;font-size:9.2px;color:#111;transform:scaleX(0.9500);-webkit-text-stroke:0.2px #111"><u>P</u>riority:</div>
<div class="x" style="left:80.11px;top:374.21px;font-size:9.2px;color:#fff;transform:scaleX(0.8857);">17.05.19</div>
<div class="x" style="left:80.12px;top:394.81px;font-size:9.2px;color:#8a8a8a;transform:scaleX(0.8829);">17.05.19</div>
<div class="x" style="left:80.08px;top:416.41px;font-size:9.2px;color:#111;transform:scaleX(0.9239);-webkit-text-stroke:0.2px #111">Project Start Date</div>
<div class="x" style="left:299.72px;top:374.11px;font-size:9.2px;color:#111;transform:scaleX(0.8800);-webkit-text-stroke:0.2px #111">17.05.19</div>
<div class="x" style="left:299.66px;top:395.51px;font-size:9.2px;color:#111;transform:scaleX(0.9417);-webkit-text-stroke:0.2px #111">NA</div>
<div class="x" style="left:299.65px;top:416.91px;font-size:9.2px;color:#111;transform:scaleX(0.9500);-webkit-text-stroke:0.2px #111">Standard</div>
<div class="x" style="left:299.50px;top:438.71px;font-size:9.2px;color:#111;transform:scaleX(0.9133);-webkit-text-stroke:0.2px #111">500</div>
<div class="x" style="left:11.38px;top:452.91px;font-size:9.2px;color:#111;transform:scaleX(0.9245);-webkit-text-stroke:0.2px #111"><u>E</u>nterprise Custom Fields</div>
<div class="x" style="left:17.93px;top:467.51px;font-size:9.2px;color:#111;transform:scaleX(0.9735);-webkit-text-stroke:0.2px #111">Depar<u>t</u>ment:</div>
<div class="x" style="left:41.10px;top:493.89px;font-size:8.4px;color:#111;transform:scaleX(0.9932);-webkit-text-stroke:0.15px #111">Custom Field Name</div>
<div class="x" style="left:230.90px;top:493.89px;font-size:8.4px;color:#111;transform:scaleX(1.0476);-webkit-text-stroke:0.15px #111">Value</div>
<div class="x" style="left:29.74px;top:646.71px;font-size:9.2px;color:#111;transform:scaleX(0.9556);-webkit-text-stroke:0.2px #111"><u>H</u>elp</div>
<div class="x" style="left:80.98px;top:646.71px;font-size:9.2px;color:#111;transform:scaleX(0.9233);-webkit-text-stroke:0.2px #111">Stat<u>i</u>stics...</div>
<div class="x" style="left:355.60px;top:646.71px;font-size:9.2px;color:#111;transform:scaleX(0.8846);-webkit-text-stroke:0.2px #111">OK</div>
<div class="x" style="left:410.80px;top:646.71px;font-size:9.2px;color:#111;transform:scaleX(0.8929);-webkit-text-stroke:0.2px #111">Cancel</div>
<!-- orange connector -->
<div class="a" style="left:121.9px;top:80px;width:1.4px;height:258px;background:#ee7d2e"></div>
<svg class="a" style="left:117px;top:336px" width="11" height="9"><path d="M1 0.5H10L5.5 8.7Z" fill="#ee7d2e"/></svg>
</body></html>
